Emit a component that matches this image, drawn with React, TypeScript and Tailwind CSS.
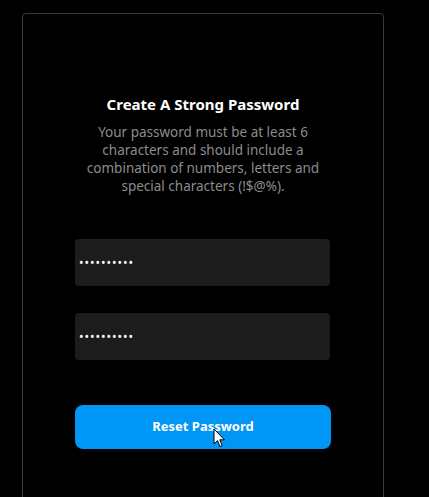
import React from 'react';

const Cursor: React.FC = () => (
    <svg className="absolute left-[138px] top-[23px]" width="13" height="20" viewBox="0 0 13 20">
        <path d="M1 1 L1 16 L4.5 12.5 L7 18.5 L9.2 17.6 L6.8 11.8 L11.5 11.8 Z" fill="#fff" stroke="#000" strokeWidth="1" strokeLinejoin="round" />
    </svg>
);

export default function App() {
    return (
        <div className="min-h-screen bg-black pl-[22px] pt-[13px] font-['Noto_Sans',sans-serif]">
            <div className="w-[362px] h-[500px] rounded-[4px] border border-[#3a3a3a] bg-black px-[52px] pt-[80px]">
                <h1 className="text-center text-[15px] leading-[20px] font-bold text-white">Create A Strong Password</h1>
                <p className="mt-[9px] text-center text-[13.5px] leading-[18px] text-[#8c8c8c]">
                    Your password must be at least 6 characters and should include a combination of numbers, letters and special characters (!$@%).
                </p>

                <div className="mt-[44px] flex flex-col gap-[27px]">
                    <input
                        type="password"
                        readOnly
                        value="abcdefghij"
                        className="h-[47px] w-[255px] rounded-[4px] bg-[#1c1c1c] px-[4px] text-[12px] tracking-[1px] text-white outline-none"
                    />
                    <input
                        type="password"
                        readOnly
                        value="abcdefghij"
                        className="h-[47px] w-[255px] rounded-[4px] bg-[#1c1c1c] px-[4px] text-[12px] tracking-[1px] text-white outline-none"
                    />
                </div>

                <div className="relative mt-[45px]">
                    <button className="h-[44px] w-[256px] rounded-[8px] bg-[#0096f5] text-[13px] font-bold text-white">
                        Reset Password
                    </button>
                    <Cursor />
                </div>
            </div>
        </div>
    );
}
